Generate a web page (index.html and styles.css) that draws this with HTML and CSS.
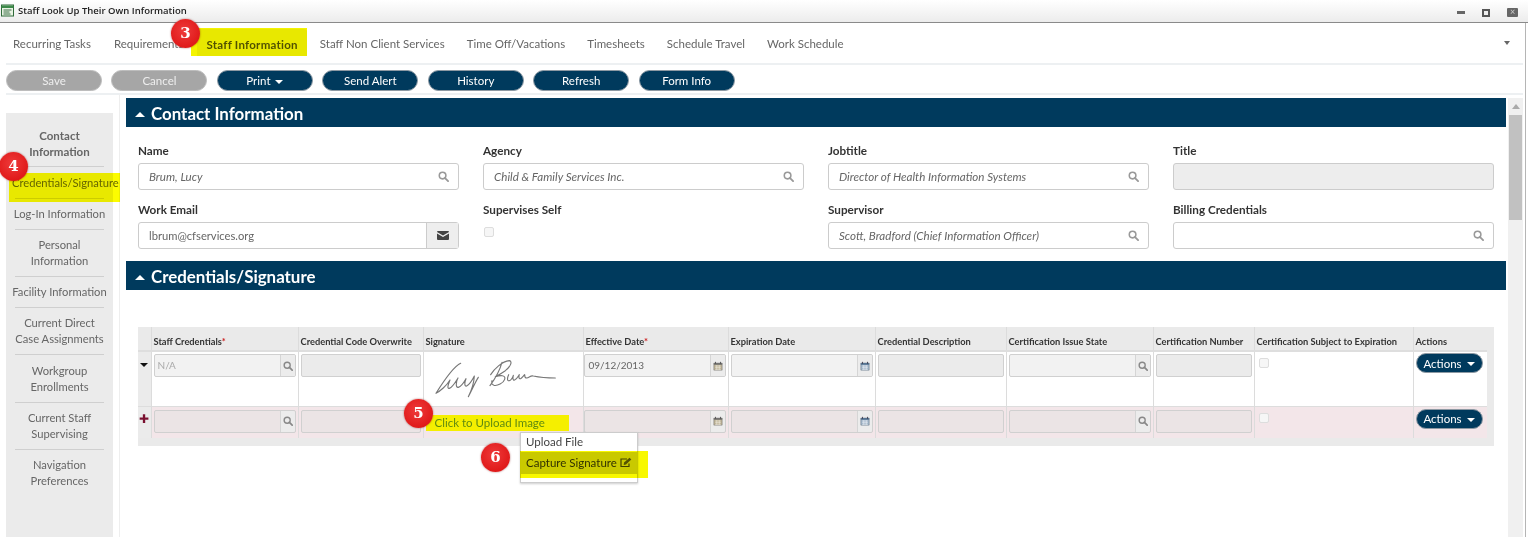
FILE: index.html
```html
<!DOCTYPE html>
<html lang="en">
<head>
<meta charset="utf-8">
<title>Staff Look Up Their Own Information</title>
<link rel="stylesheet" href="styles.css">
</head>
<body>
<svg class="sprites" width="0" height="0" aria-hidden="true">
  <symbol id="i-search" viewBox="0 0 12 12"><circle cx="5" cy="5" r="3.6" fill="none" stroke="currentColor" stroke-width="1.7"/><path d="M7.700 7.700 11 11" stroke="currentColor" stroke-width="2" stroke-linecap="round"/></symbol>
  <symbol id="i-cal" viewBox="0 0 12 12"><path d="M1 2.500h10V11H1z" fill="#b9ae8f" stroke="#8d8d8d" stroke-width=".8"/><path d="M1 2.500h10V4.500H1z" fill="#6f6f6f"/><path d="M3 1v2.500M9 1v2.500" stroke="#555" stroke-width="1.100"/><path d="M2.500 6h7M2.500 8h7M2.500 10h7M4.500 5v5.500M7.500 5v5.500" stroke="#f1eee4" stroke-width=".7"/></symbol>
  <symbol id="i-cal-blue" viewBox="0 0 12 12"><path d="M1 2.500h10V11H1z" fill="#9fb4c8" stroke="#7d8b99" stroke-width=".8"/><path d="M1 2.500h10V4.500H1z" fill="#4f6f8f"/><path d="M3 1v2.500M9 1v2.500" stroke="#445" stroke-width="1.100"/><path d="M2.500 6h7M2.500 8h7M2.500 10h7M4.500 5v5.500M7.500 5v5.500" stroke="#eef2f6" stroke-width=".7"/></symbol>
</svg>

<header class="titlebar">
  <svg class="app-icon" width="13" height="13" viewBox="0 0 13 13"><rect x=".5" y="1" width="12" height="11" fill="#e9f3e4" stroke="#2f6b3a"/><path d="M.5 1.500h12v2.500H.5z" fill="#3d8a4a"/><path d="M2.500 6h8M2.500 8h6M2.500 10h7" stroke="#3b6e46"/></svg>
  <span class="title-text">Staff Look Up Their Own Information</span>
  <div class="win-controls">
    <span class="win-min"></span>
    <span class="win-max"></span>
    <span class="win-close">×</span>
  </div>
</header>

<div class="window">
  <nav class="tabs">
    <a class="tab">Recurring Tasks</a>
    <a class="tab tab-req">Requirements</a>
    <a class="tab tab-active">Staff Information</a>
    <a class="tab">Staff Non Client Services</a>
    <a class="tab">Time Off/Vacations</a>
    <a class="tab">Timesheets</a>
    <a class="tab">Schedule Travel</a>
    <a class="tab">Work Schedule</a>
    <span class="tab-more"></span>
  </nav>

  <div class="toolbar">
    <button class="btn btn-off">Save</button>
    <button class="btn btn-off">Cancel</button>
    <button class="btn">Print <i class="caret"></i></button>
    <button class="btn">Send Alert</button>
    <button class="btn">History</button>
    <button class="btn">Refresh</button>
    <button class="btn">Form Info</button>
  </div>

  <div class="main">
    <aside class="sidenav">
      <a class="side-item side-active">Contact<br>Information</a>
      <a class="side-item side-wide">Credentials/Signature</a>
      <a class="side-item">Log-In Information</a>
      <a class="side-item">Personal<br>Information</a>
      <a class="side-item">Facility Information</a>
      <a class="side-item">Current Direct<br>Case Assignments</a>
      <a class="side-item">Workgroup<br>Enrollments</a>
      <a class="side-item">Current Staff<br>Supervising</a>
      <a class="side-item">Navigation<br>Preferences</a>
    </aside>

    <section class="content">
      <h2 class="section-head"><i class="caret-up"></i>Contact Information</h2>
      <div class="form-grid">
        <div class="field">
          <label>Name</label>
          <div class="input"><span class="val">Brum, Lucy</span><svg class="ico"><use href="#i-search"/></svg></div>
        </div>
        <div class="field">
          <label>Agency</label>
          <div class="input"><span class="val">Child &amp; Family Services Inc.</span><svg class="ico"><use href="#i-search"/></svg></div>
        </div>
        <div class="field">
          <label>Jobtitle</label>
          <div class="input"><span class="val">Director of Health Information Systems</span><svg class="ico"><use href="#i-search"/></svg></div>
        </div>
        <div class="field">
          <label>Title</label>
          <div class="input input-off"></div>
        </div>
        <div class="field">
          <label>Work Email</label>
          <div class="input input-addon">
            <span class="val val-plain">lbrum@cfservices.org</span>
            <span class="addon">
              <svg width="12" height="9" viewBox="0 0 12 9"><path d="M0 1a1 1 0 0 1 1-1h10a1 1 0 0 1 1 1L6 4.500z" fill="#444"/><path d="M0 2.500 6 6l6-3.500V8a1 1 0 0 1-1 1H1a1 1 0 0 1-1-1z" fill="#444"/></svg>
            </span>
          </div>
        </div>
        <div class="field">
          <label>Supervises Self</label>
          <span class="check check-form"></span>
        </div>
        <div class="field">
          <label>Supervisor</label>
          <div class="input"><span class="val">Scott, Bradford (Chief Information Officer)</span><svg class="ico"><use href="#i-search"/></svg></div>
        </div>
        <div class="field">
          <label>Billing Credentials</label>
          <div class="input"><span class="val"></span><svg class="ico"><use href="#i-search"/></svg></div>
        </div>
      </div>

      <h2 class="section-head"><i class="caret-up"></i>Credentials/Signature</h2>

      <div class="grid-wrap">
        <table class="grid">
          <colgroup>
            <col class="c0"><col class="c1"><col class="c2"><col class="c3"><col class="c4"><col class="c5"><col class="c6"><col class="c7"><col class="c8"><col class="c9"><col class="c10">
          </colgroup>
          <thead>
            <tr>
              <th></th>
              <th>Staff Credentials<em>*</em></th>
              <th>Credential Code Overwrite</th>
              <th>Signature</th>
              <th>Effective Date<em>*</em></th>
              <th>Expiration Date</th>
              <th>Credential Description</th>
              <th>Certification Issue State</th>
              <th>Certification Number</th>
              <th>Certification Subject to Expiration</th>
              <th>Actions</th>
            </tr>
          </thead>
          <tbody>
            <tr class="row-a">
              <td class="mark"><i class="caret-down"></i></td>
              <td><div class="cell-in"><span class="cell-val">N/A</span><span class="cell-add"><svg class="ico-s"><use href="#i-search"/></svg></span></div></td>
              <td><div class="cell-in"></div></td>
              <td class="sig-cell">
                <svg class="sig" width="135" height="45" viewBox="0 0 405 135" fill="none" stroke="#777" stroke-width="3.4" stroke-linecap="round" stroke-linejoin="round">
                  <path d="M92 28C70 38 45 75 18 118C30 112 50 95 60 78C55 90 50 105 58 103C68 100 76 85 84 72C78 82 76 102 85 100C92 98 100 88 108 74C104 84 102 98 110 96C118 92 126 80 133 66C132 85 124 110 115 128C125 110 135 85 145 70"/>
                  <path d="M216 25c-6 22-20 48-36 70M182 62c10-16 34-40 56-42 10 2 4 18-12 30-10 7-22 14-30 18 14-4 32-6 28 8-4 12-22 20-32 18-6-2-8-8-6-14"/>
                  <path d="M236 62c-4 8-6 20 2 18 6-2 10-10 12-16-2 8-2 16 4 14 6-2 10-10 14-16-2 6-2 14 4 12 4-2 8-8 12-12 0 4 2 10 6 10 8-2 12-8 20-6 14 3 40 6 66 6"/>
                </svg>
              </td>
              <td class="date-cell"><div class="cell-in"><span class="cell-val cell-dark">09/12/2013</span><span class="cell-add"><svg class="ico-s"><use href="#i-cal"/></svg></span></div></td>
              <td><div class="cell-in"><span class="cell-val"></span><span class="cell-add"><svg class="ico-s"><use href="#i-cal-blue"/></svg></span></div></td>
              <td><div class="cell-in"></div></td>
              <td><div class="cell-in cell-light"><span class="cell-val"></span><span class="cell-add"><svg class="ico-s"><use href="#i-search"/></svg></span></div></td>
              <td><div class="cell-in"></div></td>
              <td><span class="check"></span></td>
              <td><button class="btn-actions">Actions <i class="caret"></i></button></td>
            </tr>
            <tr class="row-b">
              <td class="mark mark-plus">✚</td>
              <td><div class="cell-in"><span class="cell-val"></span><span class="cell-add"><svg class="ico-s"><use href="#i-search"/></svg></span></div></td>
              <td><div class="cell-in"></div></td>
              <td class="upload-cell"><a class="upload">Click to Upload Image</a></td>
              <td class="date-cell"><div class="cell-in"><span class="cell-val"></span><span class="cell-add"><svg class="ico-s"><use href="#i-cal"/></svg></span></div></td>
              <td><div class="cell-in"><span class="cell-val"></span><span class="cell-add"><svg class="ico-s"><use href="#i-cal-blue"/></svg></span></div></td>
              <td><div class="cell-in"></div></td>
              <td><div class="cell-in cell-light"><span class="cell-val"></span><span class="cell-add"><svg class="ico-s"><use href="#i-search"/></svg></span></div></td>
              <td><div class="cell-in"></div></td>
              <td><span class="check"></span></td>
              <td><button class="btn-actions">Actions <i class="caret"></i></button></td>
            </tr>
          </tbody>
        </table>
      </div>
    </section>

    <div class="scrollbar"><i class="sb-up"></i><div class="sb-thumb"></div></div>
  </div>
</div>

<ul class="menu">
  <li class="menu-item">Upload File</li>
  <li class="menu-item menu-hover">Capture Signature
    <svg width="12" height="11" viewBox="0 0 12 11"><path d="M9 6.500V9.500H1V2h6" fill="none" stroke="#444" stroke-width="1.200"/><path d="M4 5.500 9.500.8 11.300 2.500 6 7.500l-2.300.4z" fill="#555"/></svg>
  </li>
</ul>

<div class="hl hl-tab"></div>
<div class="hl hl-side"></div>
<div class="hl hl-capture"></div>

<span class="pin pin-3">3</span>
<span class="pin pin-4">4</span>
<span class="pin pin-5">5</span>
<span class="pin pin-6">6</span>
</body>
</html>
```
FILE: styles.css
```css
* { box-sizing: border-box; }
html, body { margin: 0; padding: 0; }
body {
  position: relative;
  width: 1528px;
  height: 537px;
  overflow: hidden;
  background: #fff;
  font-family: Lato, "Open Sans", sans-serif;
  font-size: 11.5px;
  color: #666;
}
.sprites { position: absolute; }

/* title bar */
.titlebar {
  display: flex;
  align-items: center;
  height: 23px;
  padding: 0 7px 1px 1px;
  background: linear-gradient(#ffffff, #ececec);
  border-bottom: 1px solid #8a8a8a;
}
.app-icon { margin-right: 4px; }
.title-text {
  font-family: "Open Sans", sans-serif;
  font-weight: 600;
  font-size: 9.5px;
  color: #222;
}
.win-controls { margin-left: auto; display: flex; align-items: center; gap: 17px; padding: 4px 3px 0 0; }
.win-min { width: 8px; height: 3px; background: #666; }
.win-max { width: 8px; height: 8px; border: 2px solid #555; background: #eee; }
.win-close {
  width: 11px; height: 9px; line-height: 8px;
  background: #666; color: #ccc; font-size: 9px; text-align: center; border-radius: 1px;
}

/* window frame */
.window {
  height: 514px;
  margin-right: 2px;
  padding: 0 2px 0 6px;
  border-right: 1px solid #b5b5b5;
  display: flex;
  flex-direction: column;
}

/* tabs */
.tabs {
  flex: none;
  display: flex;
  align-items: center;
  height: 42px;
  padding-left: 7px;
  gap: 22px;
  border-bottom: 2px solid #edf0f2;
  font-size: 11.5px;
}
.tab { color: #666; white-space: nowrap; }
.tab-req { margin-left: 1px; }
.tab-active {
  align-self: flex-end;
  height: 27px;
  margin: 0 -9px 7px -8px;
  padding: 9px 9px 0;
  line-height: 14px;
  font-weight: 700;
  letter-spacing: .25px;
  color: #555;
  background: #f3f3f3;
  border-radius: 3px 3px 0 0;
}
.tab-more {
  margin-left: auto;
  margin-right: 13px;
  border: 3.5px solid transparent;
  border-top: 4px solid #666;
  border-bottom: 0;
}

/* toolbar */
.toolbar {
  flex: none;
  display: flex;
  align-items: center;
  gap: 9.45px;
  height: 30px;
  border-bottom: 2px solid #edf0f2;
  padding-top: 3px;
}
.btn {
  width: 96px;
  height: 21px;
  padding: 0;
  border: 1px solid #8d99a3;
  border-radius: 11px;
  background: #003a5d;
  color: #fff;
  font: 11.5px Lato, sans-serif;
}
.btn-off { background: #a6a6a6; border-color: #bdbdbd; color: #eee; }
.caret {
  display: inline-block;
  vertical-align: middle;
  margin: 0 0 1px 2px;
  border: 4px solid transparent;
  border-top: 4px solid #fff;
  border-bottom: 0;
}

/* main */
.main { flex: 1; display: flex; min-height: 0; }
.sidenav {
  flex: none;
  width: 107px;
  margin-top: 18px;
  padding-top: 15px;
  background: #ebebeb;
  font-size: 11.2px;
}
.side-item {
  display: block;
  padding-top: 7px;
  text-align: center;
  line-height: 16px;
  white-space: nowrap;
  color: #666;
}
.side-item::after {
  content: "";
  display: block;
  margin: 7px 9px 0;
  border-bottom: 1px solid #cfcfcf;
}
.side-item:first-child { padding-top: 0; }
.side-item:first-child::after { margin: 6px 9px 1px; }
.side-item:nth-child(6)::after { margin-bottom: 1px; }
.side-item:last-child::after { display: none; }
.side-active { font-weight: 700; font-size: 11.5px; }
.side-wide { text-align: left; text-indent: 6px; }

.content {
  flex: none;
  width: 1387px;
  margin-left: 6px;
  padding: 3px 0 0 6px;
  border-left: 1px solid #eee;
}
.section-head {
  display: flex;
  align-items: center;
  height: 29px;
  margin: 0;
  padding: 1px 0 0 9px;
  background: #003a5d;
  color: #fff;
  font: 700 16.9px Lato, sans-serif;
}
.caret-up {
  margin: 3px 6px 0 0;
  border: 5px solid transparent;
  border-bottom: 5px solid #fff;
  border-top: 0;
}

/* form */
.form-grid {
  display: grid;
  grid-template-columns: repeat(4, 321px);
  column-gap: 24px;
  row-gap: 13px;
  padding: 17px 12px 12px;
}
.field label {
  display: block;
  height: 14px;
  margin-bottom: 5px;
  line-height: 12px;
  font-weight: 700;
  font-size: 11.7px;
  color: #333;
}
.input {
  display: flex;
  align-items: center;
  justify-content: space-between;
  height: 27px;
  padding: 0 9px 0 10px;
  border: 1px solid #ccc;
  border-radius: 3px;
  background: #fff;
}
.input-off { background: #ededed; }
.val { font-size: 11.6px; font-style: italic; color: #666; }
.val-plain { font-style: normal; font-size: 11.2px; }
.ico { width: 11px; height: 11px; color: #999; }
.input-addon { padding-right: 0; }
.addon {
  display: flex;
  align-items: center;
  justify-content: center;
  width: 32px;
  height: 25px;
  background: #eee;
  border-left: 1px solid #ccc;
}
.check {
  display: block;
  width: 10px;
  height: 10px;
  margin: 3px 0 0 2px;
  border: 1px solid #ddd;
  border-radius: 2px;
  background: #f6f6f6;
}
.check-form { margin: 10px 0 0 1px; }
.row-a .check { margin-top: 4px; }

/* grid table */
.grid-wrap {
  margin: 37px 12px 0;
  width: 1356px;
  padding: 0 7px 8px 0;
  background: #eaeaea;
}
.grid { table-layout: fixed; width: 1349px; border-collapse: collapse; }
.c0 { width: 13px; } .c1 { width: 147px; } .c2 { width: 125px; } .c3 { width: 160px; }
.c4 { width: 145px; } .c5 { width: 147px; } .c6 { width: 131px; } .c7 { width: 147px; }
.c8 { width: 101px; } .c9 { width: 159px; } .c10 { width: 74px; }
.grid th {
  height: 24px;
  padding: 5px 2px 0 2px;
  border-left: 1px solid #dcdcdc;
  border-bottom: 2px solid #dedede;
  font-size: 9.3px;
  font-weight: 700;
  color: #333;
  text-align: left;
  white-space: nowrap;
  overflow: hidden;
}
.grid th:first-child { border-left: 0; }
.grid th em { color: #c22; font-style: normal; }
.grid td {
  padding: 2px 2px 0 2px;
  vertical-align: top;
  border-left: 1px solid #dcdcdc;
}
.grid td:first-child { border-left: 0; padding: 0; }
.row-a { height: 55px; background: #fff; border-bottom: 1px solid #ddd; }
.row-b { height: 32px; background: #f3e6e9; }
.row-b td { padding-top: 3px; }
.grid td.date-cell { padding-left: 0; }
.mark { background: #ebebeb; text-align: center; }
.caret-down {
  display: block;
  margin: 11px auto 0;
  width: 0;
  border: 4px solid transparent;
  border-top: 4px solid #111;
  border-bottom: 0;
}
.mark-plus { color: #7a1030; font-size: 12px; line-height: 24px; }
.cell-in {
  display: flex;
  justify-content: flex-end;
  height: 23px;
  border: 1px solid #d0d0d0;
  border-radius: 2px;
  background: #ebebeb;
}
.cell-light { background: #f2f2f2; }
.row-b .cell-light { background: #f0e4e7; }
.row-b .cell-in { background: #ebe4e5; }
.cell-val { flex: 1; padding-left: 3px; font-size: 10px; line-height: 21px; color: #aaa; }
.row-a .cell-in:has(.cell-add):not(.cell-light) { background: #f2f2f2; }
.cell-dark { color: #666; padding-left: 4px; }
.cell-add {
  display: flex;
  align-items: center;
  justify-content: center;
  width: 15px;
  background: #ececec;
  border-left: 1px solid #d5d5d5;
  border-radius: 0 2px 2px 0;
}
.ico-s { width: 10px; height: 10px; color: #888; }
.grid td.sig-cell { padding: 2px 0 0 6px; }
.sig { display: block; }
.grid td.upload-cell { padding: 8px 0 0 2px; }
.upload {
  display: block;
  width: 143px;
  height: 16px;
  padding-left: 9px;
  font-size: 11.5px;
  line-height: 15px;
  color: #5f8a10;
  background: #f5ef00;
}
.btn-actions {
  display: block;
  width: 67px;
  height: 20px;
  margin: -1px 0 0 0;
  padding: 0;
  border: 1px solid #8d99a3;
  border-radius: 10px;
  background: #003a5d;
  color: #fff;
  font: 11.5px Lato, sans-serif;
}

/* scrollbar */
.scrollbar {
  flex: 1;
  margin: 3px 0 0 2px;
  background: #f0f0f0;
  position: relative;
}
.sb-up {
  display: block;
  width: 0;
  margin: 6px auto 0;
  border: 4px solid transparent;
  border-bottom: 5px solid #aaa;
  border-top: 0;
}
.sb-thumb { height: 105px; margin: 6px 1px 0; background: #c1c1c1; }

/* popup menu */
.menu {
  position: absolute;
  left: 520px;
  top: 432px;
  width: 118px;
  height: 51px;
  margin: 0;
  padding: 0;
  list-style: none;
  background: #fff;
  border: 1px solid #ccc;
  box-shadow: 0 1px 2px rgba(0,0,0,.2);
}
.menu-item { height: 19px; padding: 0 5px; line-height: 18px; font-size: 11.5px; color: #444; white-space: nowrap; }
.menu-hover { background: #cfcfcf; height: 22px; line-height: 22px; color: #333; }
.menu-hover svg { vertical-align: -1px; }

/* highlighter overlays */
.hl { position: absolute; mix-blend-mode: multiply; }
.hl-tab { left: 191px; top: 28px; width: 116px; height: 28px; background: #f4f400; }
.hl-side { left: 9px; top: 173px; width: 111px; height: 29px; background: #fcfc00; }
.hl-capture { left: 520px; top: 451px; width: 128px; height: 27px; background: #f8f800; }

/* numbered annotation pins */
.pin {
  position: absolute;
  width: 29px;
  height: 29px;
  border-radius: 50%;
  background: radial-gradient(circle at 45% 40%, #ee3a3a, #e01a1a 70%, #c81818);
  box-shadow: 0 0 2px rgba(120,0,0,.6);
  color: #fff;
  font: 700 15px/28px "DejaVu Serif", serif;
  text-align: center;
}
.pin-3 { left: 171px; top: 19px; }
.pin-4 { left: -1px; top: 152px; }
.pin-5 { left: 404px; top: 399px; }
.pin-6 { left: 481px; top: 443px; }
```
